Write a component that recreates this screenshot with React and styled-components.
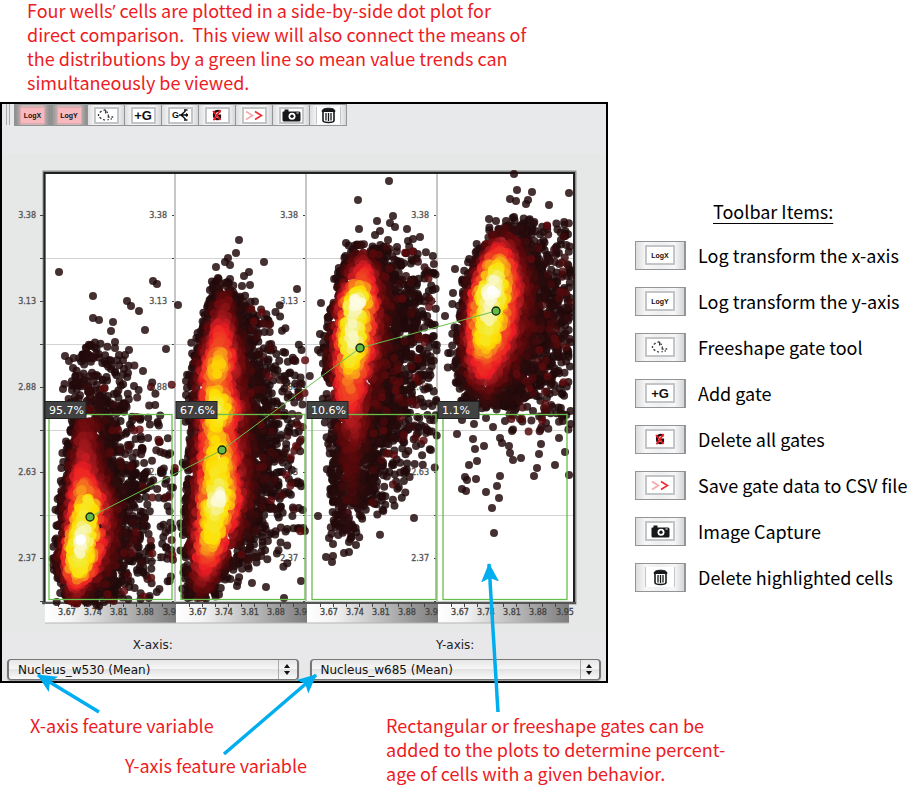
import React from "react";
import styled, { createGlobalStyle } from "styled-components";

const Global = createGlobalStyle`
  *, *::before, *::after { box-sizing: border-box; }
  body { margin: 0; background: #fff; }
`;

const noteFont = `"Noto Sans CJK SC", "Open Sans", sans-serif`;
const uiFont = `"DejaVu Sans", sans-serif`;

const Page = styled.div`
  position: relative;
  font-family: ${noteFont};
  font-size: 18px;
  line-height: 24px;
  color: #000;
`;

const Note = styled.p`
  margin: 0;
  color: #ed1c24;
  padding-left: ${(p) => p.$indent || 0};
  white-space: pre-line;
`;

const Apostrophe = styled.span`
  font-family: "Open Sans", sans-serif;
  line-height: 1;
`;

const Intro = styled.header`
  height: 102px;
  padding-left: 27px;
  margin-top: -2px;
  margin-bottom: 2px;
`;

const Main = styled.main`
  display: grid;
  grid-template-columns: minmax(0, 608px) minmax(272px, 1fr);
  column-gap: 27px;
`;

const Panel = styled.section`
  border: 2px solid #000;
  background: linear-gradient(#e8e9eb 0 50px, #e6e8e7 50px 528px, #e8e8ea 528px);
  font-family: ${uiFont};
  padding-bottom: 1px;
`;

const Toolbar = styled.div`
  display: flex;
  height: 22px;
  padding-left: 4px;
`;

const Grip = styled.span`
  width: 4px;
  height: 21px;
  margin-right: 4px;
  border: solid #aaa;
  border-width: 0 1px;
`;

const ToolButton = styled.button`
  display: flex;
  align-items: center;
  justify-content: center;
  flex: none;
  width: ${(p) => (p.$legend ? 51 : 37)}px;
  height: ${(p) => (p.$legend ? 29 : 22)}px;
  padding: 0;
  border: solid #929496;
  border-width: ${(p) => (p.$legend ? "1px 2px 1px 1px" : "1px 1px 1px 0")};
  background: ${(p) =>
    p.$on
      ? "linear-gradient(90deg, #8b8b8b, #c9b9b9 22%, #c9b9b9 78%, #8b8b8b)"
      : "linear-gradient(90deg, #dcddde, #f7f7f8 20%, #eeeff0 50%, #f7f7f8 80%, #d5d6d8)"};
  &:first-of-type { border-left-width: 1px; }
`;

const IconFrame = styled.span`
  display: flex;
  align-items: center;
  justify-content: center;
  width: ${(p) => (p.$legend ? 30 : 25)}px;
  height: ${(p) => (p.$legend ? 20 : 17)}px;
  border: ${(p) => (p.$on ? 1 : 2)}px ${(p) => (p.$plain ? "solid" : "double")} ${(p) => (p.$on ? "#dfa9ad" : "#c4c5c7")};
  border-width: ${(p) => (p.$open ? "0 1px" : null)};
  background: ${(p) => (p.$on ? "#f7b9bd" : "#fff")};
`;

const Glyph = styled.span`
  font: bold ${(p) => p.$size}px/1 "Liberation Sans", Arial, sans-serif;
  color: #111;
`;

const Chart = styled.svg`
  display: block;
  width: 100%;
  height: auto;
  font-family: ${uiFont};
`;

const Axes = styled.div`
  display: grid;
  grid-template-columns: 1fr 1fr;
  column-gap: 11px;
  padding: 0 5px;
`;

const AxisField = styled.label`
  display: flex;
  flex-direction: column;
  font-size: 12px;
  line-height: 14px;
  text-align: center;
  color: #222;
  padding-top: 6px;
  gap: 7px;
`;

const SelectBox = styled.span`
  position: relative;
  display: block;
`;

const Select = styled.select`
  appearance: none;
  display: block;
  width: 100%;
  height: 21px;
  margin: 0;
  padding: 0 24px 0 9px;
  border: 1px solid #777;
  border-width: 1px 2px;
  border-radius: 4px;
  background: linear-gradient(#e6e6e6, #f6f6f6 45%, #e2e2e2 50%, #fafafa);
  box-shadow: 0 1px 1px #999;
  font: 12px/18px ${uiFont};
  color: #111;
`;

const Stepper = styled.svg`
  position: absolute;
  right: 2px;
  top: 1px;
  width: 19px;
  height: 19px;
  pointer-events: none;
`;

const Legend = styled.aside`
  padding-top: 98px;
`;

const LegendTitle = styled.h2`
  width: max-content;
  margin: 0 0 10px 78px;
  font-size: 18px;
  line-height: 22px;
  font-weight: 400;
  text-decoration: underline;
  text-underline-offset: 4px;
  text-decoration-thickness: 1px;
`;

const LegendList = styled.ul`
  list-style: none;
  margin: 0;
  padding: 0;
`;

const LegendRow = styled.li`
  display: flex;
  align-items: center;
  gap: 12px;
  height: 46px;
  white-space: nowrap;
`;

const Footer = styled.footer`
  display: grid;
  grid-template-columns: 356px minmax(0, 1fr);
  padding: 30px 0 0 30px;
`;

const AxisNotes = styled.div`
  display: grid;
  align-content: start;
  row-gap: 16px;
`;

const Arrows = styled.svg`
  position: absolute;
  left: 0;
  top: 0;
  pointer-events: none;
`;

/* ---------- icons ---------- */

const DashedShape = () => (
  <svg width="18" height="12" viewBox="0 0 18 12" fill="none" stroke="#3a3a3a" strokeWidth="1.300">
    <path d="M2.800 3.500L4.600 2M1.500 5v2M2.500 8.300l1.800 1.300M6 10.500l2 .6M6.500 1.300l1.800-.6M8.600.8v3.600M9.600 2.600l1.200 1.200M11.300 5.500v2.600h1.400M14.500 8h1.700M10.500 11l1.200-.6M13.600 10h1.200" />
  </svg>
);

const BranchIcon = () => (
  <svg width="9" height="12" viewBox="0 0 9 12" fill="none" stroke="#111" strokeWidth="1.400">
    <path d="M0 6h9M2 6l4.500-4M2 6l4.500 4M5 1h3.500M5 11h3.500M7 4.600L9 6 7 7.400" />
  </svg>
);

const ClearIcon = () => (
  <svg width="12" height="12" viewBox="0 0 12 12" fill="none">
    <path d="M9 3.500C8.400 1.300 3 1 3 6s5.400 5 6 2.500V6.500H6.500" stroke="#221012" strokeWidth="2.200" />
    <path d="M2 2l7.500 9M9.500 1L2.500 11.300" stroke="#ed1c24" strokeWidth="1.800" />
  </svg>
);

const ChevronsIcon = () => (
  <svg width="18" height="11" viewBox="0 0 18 11" fill="none" strokeWidth="1.700">
    <path d="M1 1.500l6.500 4L1 9.500" stroke="#f5a9ac" />
    <path d="M10 1.500l6.500 4L10 9.500" stroke="#ee2c33" />
  </svg>
);

const CameraIcon = () => (
  <svg width="19" height="13" viewBox="0 0 19 13">
    <path d="M1 2.500h1.500V.5h4v2H17q1.500 0 1.500 1.500v7q0 1.500-1.500 1.500H2Q.5 12.500.5 11V3z" fill="#161819" />
    <circle cx="10" cy="7.300" r="3.500" fill="#fff" />
    <circle cx="10" cy="7.300" r="1.700" fill="#161819" />
    <path d="M14.500 4h2.200" stroke="#fff" />
  </svg>
);

const TrashIcon = () => (
  <svg width="15" height="17" viewBox="0 0 15 17" fill="none" stroke="#161819">
    <path d="M1 4.500Q1 1.200 7.500 1.200T14 4.500z" fill="#161819" />
    <path d="M2 5v8.500q0 2 5.500 2t5.500-2V5" strokeWidth="1.600" />
    <path d="M5 6v7.500M7.500 6v8M10 6v7.500" strokeWidth="1.300" />
  </svg>
);

const TOOLS = [
  { id: "logx", label: "Log transform the x-axis", pressed: true, art: <Glyph $size={7}>LogX</Glyph> },
  { id: "logy", label: "Log transform the y-axis", pressed: true, art: <Glyph $size={7}>LogY</Glyph> },
  { id: "free", label: "Freeshape gate tool", art: <DashedShape /> },
  { id: "add", label: "Add gate", art: <Glyph $size={13}>+G</Glyph> },
  { id: "branch", label: "Split gate", hidden: true, art: <><Glyph $size={9}>G</Glyph><BranchIcon /></> },
  { id: "clear", label: "Delete all gates", art: <ClearIcon /> },
  { id: "save", label: "Save gate data to CSV file", art: <ChevronsIcon /> },
  { id: "camera", label: "Image Capture", plain: true, art: <CameraIcon /> },
  { id: "trash", label: "Delete highlighted cells", open: true, art: <TrashIcon /> },
];

function Tool({ tool, legend }) {
  const on = tool.pressed && !legend;
  return (
    <ToolButton type="button" aria-label={tool.label} $on={on} $legend={legend}>
      <IconFrame $on={on} $legend={legend} $plain={tool.plain} $open={tool.open}>
        {tool.art}
      </IconFrame>
    </ToolButton>
  );
}

/* ---------- cell populations ---------- */

function random(seed) {
  let a = seed;
  return () => {
    a = (a + 0x6d2b79f5) | 0;
    let t = Math.imul(a ^ (a >>> 15), 1 | a);
    t = (t + Math.imul(t ^ (t >>> 7), 61 | t)) ^ t;
    return ((t ^ (t >>> 14)) >>> 0) / 4294967296;
  };
}

const HEAT = [
  [0, 30, 9, 10], [0.14, 42, 12, 13], [0.24, 82, 9, 11], [0.36, 122, 14, 17],
  [0.46, 176, 27, 32], [0.53, 237, 28, 36], [0.66, 240, 72, 34], [0.75, 249, 160, 27],
  [0.82, 255, 222, 0], [0.92, 244, 234, 50], [0.98, 247, 243, 170], [1.05, 255, 255, 255],
];

function heat(v) {
  const level = Math.max(0, Math.min(1.049, v));
  const i = HEAT.findIndex((s) => s[0] > level);
  const a = HEAT[i - 1];
  const b = HEAT[i];
  const t = (level - a[0]) / (b[0] - a[0]);
  return `rgb(${[1, 2, 3].map((k) => Math.round(a[k] + (b[k] - a[k]) * t)).join(",")})`;
}

/* body rows: [y, left, ridge, right, density at the ridge] */
const WELLS = [
  {
    x: 45, gate: [49, 172], percent: "95.7%", mean: [90, 517], seed: 11,
    body: [
      [343, 86, 92, 100, 0.05], [375, 72, 92, 114, 0.1], [400, 70, 88, 112, 0.14], [422, 70, 86, 118, 0.3], [445, 68, 84, 116, 0.42],
      [468, 65, 83, 122, 0.5], [485, 62, 84, 128, 0.66], [500, 61, 87, 130, 0.86], [520, 59, 86, 130, 0.9],
      [540, 58, 82, 130, 1.02], [558, 55, 80, 126, 0.96], [574, 56, 79, 120, 0.8], [586, 60, 76, 112, 0.5], [602, 64, 73, 96, 0.24],
    ],
    tail: { n: 760, y: 530, sd: 80, top: 365, bottom: 601, from: 100, spread: 42 },
    strays: [[59, 272], [93, 296], [127, 301], [131, 306], [139, 311], [153, 281], [157, 284], [93, 318], [99, 320], [113, 322], [111, 331], [145, 330], [166, 349], [129, 350], [115, 342], [143, 371], [65, 356], [69, 361], [63, 389], [115, 348], [119, 355], [125, 355], [134, 386], [109, 360], [111, 369], [128, 373], [73, 368]],
  },
  {
    x: 176, gate: [181, 305], percent: "67.6%", mean: [222, 450], seed: 29,
    body: [
      [278, 214, 221, 228, 0.05], [294, 212, 226, 240, 0.24], [316, 204, 222, 250, 0.42], [334, 200, 221, 254, 0.58],
      [350, 196, 220, 258, 0.69], [368, 192, 218, 260, 0.82], [384, 190, 215, 262, 0.72], [408, 192, 219, 264, 0.93],
      [432, 190, 216, 266, 0.77], [458, 188, 219, 266, 0.86], [480, 187, 219, 266, 0.88], [498, 187, 219, 264, 1.02],
      [520, 185, 216, 260, 0.88], [540, 184, 212, 252, 0.83], [556, 184, 209, 244, 0.64], [574, 185, 205, 232, 0.48], [598, 188, 202, 218, 0.14],
    ],
    tail: { n: 800, y: 445, sd: 80, top: 300, bottom: 568, from: 236, spread: 38 },
    strays: [[239, 240], [236, 253], [228, 258], [225, 262], [216, 267], [230, 265], [264, 262], [297, 289], [178, 305], [249, 272], [244, 276], [250, 285], [242, 286], [203, 327], [186, 381], [186, 395], [218, 278], [230, 279], [237, 586], [252, 583], [266, 587], [284, 598], [301, 581], [191, 597], [191, 461], [187, 388], [196, 409]],
  },
  {
    x: 307, gate: [312, 436], percent: "10.6%", mean: [360, 348], seed: 47,
    body: [
      [243, 356, 363, 370, 0.12], [256, 345, 364, 386, 0.34], [270, 340, 364, 392, 0.54], [284, 336, 361, 396, 0.7],
      [300, 332, 358, 398, 1.02], [318, 329, 355, 400, 0.96], [340, 327, 353, 400, 0.97], [360, 325, 352, 398, 0.87],
      [376, 325, 350, 396, 0.72], [396, 326, 349, 392, 0.64], [412, 328, 351, 386, 0.5], [434, 330, 354, 384, 0.36],
      [455, 331, 352, 380, 0.24], [480, 331, 351, 376, 0.2], [505, 333, 350, 373, 0.16], [538, 338, 347, 358, 0.1],
    ],
    tail: { n: 1050, y: 350, sd: 72, top: 244, bottom: 512, from: 372, spread: 42 },
    strays: [[389, 181], [358, 200], [393, 216], [377, 221], [359, 229], [346, 243], [388, 240], [407, 229], [420, 237], [397, 247], [375, 235], [380, 231], [390, 223], [395, 227], [408, 241], [413, 239], [321, 303], [320, 334], [318, 350], [329, 538], [333, 544], [349, 542], [356, 545], [326, 557], [333, 556], [332, 562], [344, 553], [349, 552], [414, 518], [318, 516]],
  },
  {
    x: 438, gate: [443, 567], percent: "1.1%", mean: [496, 311], seed: 83,
    body: [
      [225, 488, 510, 532, 0.1], [240, 480, 503, 536, 0.38], [252, 475, 501, 540, 0.58], [265, 470, 498, 542, 0.82],
      [278, 466, 495, 546, 0.96], [294, 462, 491, 548, 1.03], [312, 460, 490, 548, 0.97], [328, 458, 488, 546, 0.94],
      [345, 456, 486, 544, 0.82], [360, 455, 485, 540, 0.62], [376, 456, 485, 532, 0.5], [390, 460, 487, 526, 0.24], [408, 464, 490, 514, 0.1],
    ],
    tail: { n: 1150, y: 322, sd: 62, top: 218, bottom: 432, from: 508, spread: 52 },
    strays: [[514, 174], [517, 190], [532, 192], [569, 193], [510, 199], [516, 201], [526, 204], [528, 200], [549, 205], [489, 219], [496, 221], [506, 221], [514, 217], [438, 231], [455, 269], [445, 316], [453, 293], [457, 434], [473, 439], [475, 449], [469, 465], [477, 461], [484, 446], [500, 438], [502, 443], [509, 446], [510, 453], [513, 460], [521, 458], [541, 444], [539, 454], [537, 468], [534, 476], [555, 465], [559, 438], [565, 452], [569, 475], [465, 477], [467, 480], [462, 489], [466, 491], [476, 479], [486, 492], [497, 486], [500, 476], [499, 498], [492, 508], [494, 533], [462, 420], [474, 424], [486, 418], [493, 427], [505, 421], [512, 431], [470, 413], [520, 419], [546, 423], [563, 421]],
  },
];

function buildCells({ body, tail, strays, seed, x: origin }) {
  const rnd = random(seed);
  const normal = () => Math.sqrt(-2 * Math.log(rnd() + 1e-9)) * Math.cos(2 * Math.PI * rnd());
  const cells = strays.map(([x, y]) => ({ x, y, level: 0.03, faint: true }));
  const end = origin + (origin > 400 ? 133 : 130);
  for (let i = 0; i < tail.n; i++) {
    const y = tail.y + normal() * tail.sd;
    const x = tail.from - Math.log(1 - rnd() * 0.94) * tail.spread;
    if (y < tail.top || y > tail.bottom || x > end) continue;
    cells.push({ x, y, level: rnd() ** 4 * 0.28, faint: true });
  }
  for (let k = 0; k < body.length - 1; k++) {
    const a = body[k];
    const b = body[k + 1];
    const sparse = a[4] < 0.2 ? 0.5 : 1;
    const n = Math.round((((b[0] - a[0]) * (a[3] - a[1] + b[3] - b[1])) / 2 / 10) * sparse);
    for (let i = 0; i < n; i++) {
      const t = rnd();
      const [y, l, c, r, peak] = a.map((v, j) => v + (b[j] - v) * t);
      const x = l + (r - l) * rnd();
      const left = x < c;
      const d = left ? (c - x) / (c - l) : (x - c) / (r - c);
      if (d > 0.75 && rnd() < (left ? 0.3 : 0.55)) continue;
      const fall = left ? Math.exp(-2.2 * d ** 2.3) : Math.exp(-2.8 * d ** 1.6);
      const level = peak * fall + (rnd() - 0.5) * 0.07;
      cells.push({ x: x + normal(), y: y + normal(), level, faint: level < 0.14 });
    }
    const edge = Math.round((b[0] - a[0]) / 2.5);
    for (let i = 0; i < edge; i++) {
      const t = rnd();
      const [y, l, , r] = a.map((v, j) => v + (b[j] - v) * t);
      const left = rnd() < 0.45;
      cells.push({ x: left ? l + 2 - Math.abs(normal()) * 4 : r + Math.abs(normal()) * 9, y: y + normal() * 3, level: 0.04, faint: true });
    }
  }
  return cells.filter((c) => c.x > origin + 1 && c.x < end + 2).sort((p, q) => p.level - q.level);
}

const CELLS = WELLS.map(buildCells);
const Y_TICKS = [[215, "3.38"], [301, "3.13"], [387, "2.88"], [472, "2.63"], [558, "2.37"]];
const X_TICKS = ["3.67", "3.74", "3.81", "3.88"];

const radius = (c) => (c.faint ? 4 : c.level > 0.5 ? 5 : 4.5);

function DotPlot() {
  return (
    <Chart viewBox="2 126 604 506" role="img" aria-label="Side-by-side dot plots of four wells">
      <defs>
        <linearGradient id="ruler">
          <stop offset="0" stopColor="#fff" />
          <stop offset="0.200" stopColor="#f3f3f3" />
          <stop offset="1" stopColor="#7d7d7d" />
        </linearGradient>
      </defs>
      <rect x="44" y="172" width="531" height="431" fill="#fff" stroke="#8d908f" strokeWidth="3" />
      <path d="M45 258.500H573M45 344.500H573M45 430.500H573M45 515.500H573" stroke="#d3d3d3" />
      <path d="M44.500 602.500V173H574V602.500" fill="none" stroke="#222" strokeWidth="2" />
      {WELLS.map((w, i) => (
        <g key={w.x} fontSize="8" fill="#555" textAnchor="end">
          {i > 0 && <path d={`M${w.x - 1} 174V602`} stroke="#c6c6c6" strokeWidth="2" />}
          {Y_TICKS.map(([y, label]) => (
            <text key={label} x={w.x - 9} y={y + 3} stroke="#555" strokeWidth="0.300">{label}</text>
          ))}
          <path d={Array.from({ length: 10 }, (_, k) => `M${w.x - (i ? 4 : 5)} ${Math.round(215 + 42.9 * k) + 0.5}h${i ? 2 : 4}`).join("")} stroke="#444" />
          <rect x={w.x} y="603" width="131" height="20" fill="url(#ruler)" />
          <path d={`M${w.x} 623H${w.x + 131}`} stroke="#b5b5b5" />
        </g>
      ))}
      <path d="M42 603H576" stroke="#555" strokeWidth="2" />
      {WELLS.map((w, i) => (
        <g key={w.x} fontSize="8" fill="#444" stroke="#444" strokeWidth="0.300" textAnchor="middle">
          {X_TICKS.map((label, k) => (
            <text key={label} x={w.x + 22 + k * 26} y="615">{label}</text>
          ))}
          <text x={w.x + 118} y="615" textAnchor="start">{i === 3 ? "3.95" : "3.9"}</text>
          <path d={Array.from({ length: 9 }, (_, k) => `M${w.x + 13 + k * 13}.5 603v4`).join("")} strokeWidth="1" />
        </g>
      ))}
      {CELLS.map((cells, i) => (
        <g key={WELLS[i].x}>
          {cells.map((c, k) => (
            <circle key={k} cx={c.x.toFixed(1)} cy={c.y.toFixed(1)} r={radius(c)} fill={heat(c.level)} opacity={c.faint ? 0.84 : 0.94} />
          ))}
        </g>
      ))}
      {WELLS.map((w) => (
        <g key={w.x}>
          <rect x={w.gate[0]} y="414.500" width={w.gate[1] - w.gate[0]} height="185" fill="none" stroke="#68bf4b" strokeWidth="1.300" />
          <rect x={w.x} y="401.500" width="41" height="17" fill="#414241" stroke="#222" />
          <text x={w.x + 4} y="414" fontSize="11" fill="#fff">{w.percent}</text>
        </g>
      ))}
      <polyline points={WELLS.map((w) => w.mean.join(",")).join(" ")} fill="none" stroke="#68bf4b" />
      {WELLS.map((w) => (
        <circle key={w.x} cx={w.mean[0]} cy={w.mean[1]} r="4" fill="#62bb46" stroke="#10240f" strokeWidth="1.300" />
      ))}
    </Chart>
  );
}

function AxisSelect({ label, value }) {
  return (
    <AxisField>
      {label}
      <SelectBox>
        <Select defaultValue={value}>
          <option>{value}</option>
        </Select>
        <Stepper viewBox="0 0 19 19">
          <path d="M.5 0v19" stroke="#aaa" />
          <path d="M9 4l3 4H6zM9 15l3-4H6z" fill="#111" />
        </Stepper>
      </SelectBox>
    </AxisField>
  );
}

export default function App() {
  return (
    <Page>
      <Global />
      <Intro>
        <Note>
          Four wells<Apostrophe>’</Apostrophe>
          {" cells are plotted in a side-by-side dot plot for\ndirect comparison.\u00a0 This view will also connect the means of\nthe distributions by a green line so mean value trends can\nsimultaneously be viewed."}
        </Note>
      </Intro>
      <Main>
        <Panel>
          <Toolbar>
            <Grip />
            {TOOLS.map((t) => <Tool key={t.id} tool={t} />)}
          </Toolbar>
          <DotPlot />
          <Axes>
            <AxisSelect label="X-axis:" value="Nucleus_w530 (Mean)" />
            <AxisSelect label="Y-axis:" value="Nucleus_w685 (Mean)" />
          </Axes>
        </Panel>
        <Legend>
          <LegendTitle>Toolbar Items:</LegendTitle>
          <LegendList>
            {TOOLS.filter((t) => !t.hidden).map((t) => (
              <LegendRow key={t.id}>
                <Tool tool={t} legend />
                {t.label}
              </LegendRow>
            ))}
          </LegendList>
        </Legend>
      </Main>
      <Footer>
        <AxisNotes>
          <Note>X-axis feature variable</Note>
          <Note $indent="95px">Y-axis feature variable</Note>
        </AxisNotes>
        <Note>{"Rectangular or freeshape gates can be\nadded to the plots to determine percent-\nage of cells with a given behavior."}</Note>
      </Footer>
      <Arrows width="608" height="786" viewBox="0 0 608 786" fill="none" stroke="#00aeef" strokeWidth="3.500" aria-hidden="true">
        <defs>
          <marker id="head" markerUnits="userSpaceOnUse" markerWidth="20" markerHeight="20" refX="18" refY="10" orient="auto">
            <path d="M19 10L0 19 4 10 0 1z" fill="#00aeef" stroke="none" />
          </marker>
        </defs>
        <path d="M99 714L38 677" markerEnd="url(#head)" />
        <path d="M224 756L316 677" markerEnd="url(#head)" />
        <path d="M498 714L489 566" markerEnd="url(#head)" />
      </Arrows>
    </Page>
  );
}
